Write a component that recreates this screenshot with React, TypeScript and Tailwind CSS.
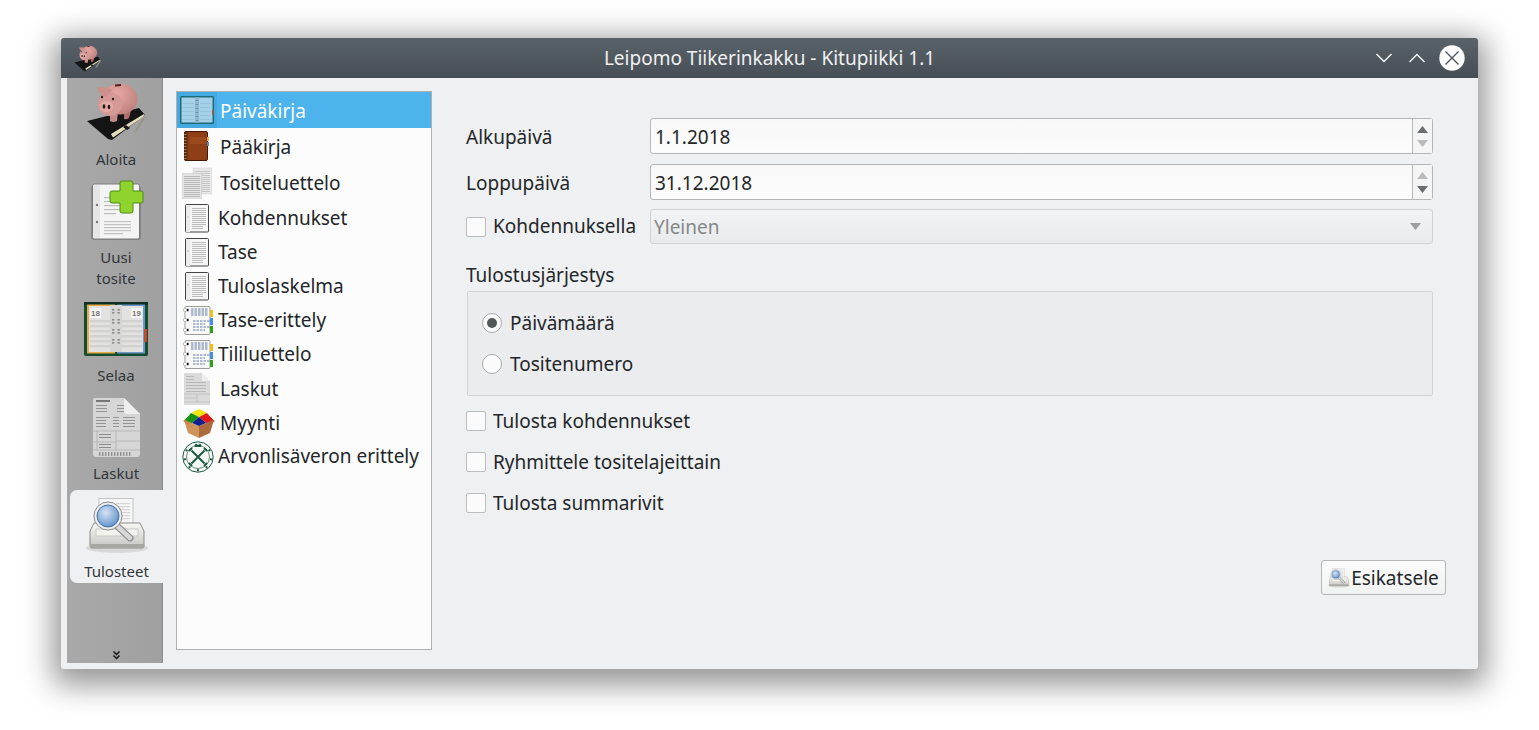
import { type ReactNode } from "react";

type IconProps = { w: number; h: number };

const Pig = ({ w, h }: IconProps) => (
  <svg width={w} height={h} viewBox="0 0 60 60">
    <defs>
      <radialGradient id="pigBody" cx="0.4" cy="0.35" r="0.8">
        <stop offset="0" stopColor="#e6aaa5" />
        <stop offset="1" stopColor="#b97a76" />
      </radialGradient>
    </defs>
    <path d="M1 39 L53 26 L59 33 L26 58 L22 57 Z" fill="#141414" />
    <path d="M25 52 L58 32 L58.5 34 L27 55.5 Z" fill="#e4dfbd" />
    <path d="M37 45 L40 43 L44 46 L41 48 Z" fill="#141414" />
    <path d="M58 33 L49 48 L48 51 L51 49 L60 35 Z" fill="#96968c" />
    <path d="M24 30 L24 39 Q27 41 31 39 L32 30 Z" fill="#c58a86" />
    <path d="M38 30 L38 37 Q41 38 43 36 L45 28 Z" fill="#ae716d" />
    <ellipse cx="34" cy="17" rx="17.5" ry="15.5" fill="url(#pigBody)" />
    <ellipse cx="24" cy="22" rx="12" ry="12" fill="#d69a96" />
    <path d="M11 6 Q18 3 26 8 L20 15 Q14 13 11 6 Z" fill="#cf8f8b" />
    <path d="M29 2.5 L35 2 L35 4 L29 4.5 Z" fill="#4a2020" />
    <ellipse cx="20.5" cy="24.5" rx="6.5" ry="5.5" fill="#e3aaa6" />
    <ellipse cx="18" cy="24.5" rx="1.4" ry="2.2" fill="#2a1a1a" />
    <ellipse cx="23" cy="25" rx="1.4" ry="2.2" fill="#2a1a1a" />
    <circle cx="16" cy="15" r="1.2" fill="#2a1a1a" />
    <circle cx="27" cy="17" r="1.2" fill="#2a1a1a" />
  </svg>
);

const NewDoc = ({ w, h }: IconProps) => (
  <svg width={w} height={h} viewBox="0 0 60 60">
    <rect x="5" y="6" width="50" height="54" rx="3" fill="#000" opacity="0.18" />
    <rect x="6.5" y="4" width="47" height="55" rx="2" fill="#f4f4f4" stroke="#7c7c7c" />
    <rect x="7" y="5" width="7" height="53" fill="#e6e6e6" />
    <circle cx="11" cy="25" r="1.2" fill="#777" />
    <circle cx="11" cy="42" r="1.2" fill="#777" />
    {[17, 21, 25, 29, 33].map((y) => (
      <rect key={y} x="18" y={y} width={y === 33 ? 12 : 20} height="1.2" fill="#bdbdbd" />
    ))}
    {[41, 44, 47, 50, 53].map((y) => (
      <rect key={y} x="18" y={y} width={y === 53 ? 19 : 27} height="1.2" fill="#c2c2c2" />
    ))}
    <path
      d="M36 1 H45 Q47 1 47 3 V11 H55 Q57 11 57 13 V21 Q57 23 55 23 H47 V31 Q47 33 45 33 H36 Q34 33 34 31 V23 H26 Q24 23 24 21 V13 Q24 11 26 11 H34 V3 Q34 1 36 1 Z"
      fill="#8fd42c"
      stroke="#4f8a12"
      strokeWidth="1"
    />
  </svg>
);

const Planner = ({ w, h }: IconProps) => (
  <svg width={w} height={h} viewBox="0 0 64 54">
    <rect x="0" y="0" width="64" height="54" rx="2" fill="#134d2f" />
    <rect x="0" y="0" width="64" height="3" fill="#0f2f22" />
    <rect x="3" y="2.5" width="28" height="49" fill="#e8ab48" />
    <rect x="33" y="2.5" width="28" height="49" fill="#6f96c8" />
    <rect x="60" y="27" width="3" height="13" fill="#c44a28" />
    <rect x="5" y="4" width="54" height="46" fill="#e2e2e0" />
    <rect x="6" y="6" width="11" height="10" rx="1" fill="#f6f6f6" />
    <rect x="47" y="6" width="11" height="10" rx="1" fill="#f6f6f6" />
    <text x="11.5" y="14" textAnchor="middle" fontSize="8" fontWeight="700" fill="#777" fontFamily="'Liberation Sans', sans-serif">18</text>
    <text x="52.5" y="14" textAnchor="middle" fontSize="8" fontWeight="700" fill="#777" fontFamily="'Liberation Sans', sans-serif">19</text>
    {[18, 23, 28, 33, 38, 43].map((y) => (
      <g key={y}>
        <rect x="6" y={y} width="20" height="2.4" fill="#d2d2d0" />
        <rect x="38" y={y} width="20" height="2.4" fill="#d2d2d0" />
      </g>
    ))}
    <rect x="26" y="3" width="12" height="47" fill="#d6d6d4" />
    {[7, 10, 17, 20, 27, 30, 37, 40].map((y) => (
      <g key={y}>
        <rect x="28" y={y} width="2.4" height="1.6" fill="#8b8b89" />
        <rect x="33.5" y={y} width="2.4" height="1.6" fill="#8b8b89" />
      </g>
    ))}
  </svg>
);

const Invoice = ({ w, h }: IconProps) => (
  <svg width={w} height={h} viewBox="0 0 47 59">
    <path d="M2 0 H31 L47 16 V56 Q47 59 44 59 H3 Q0 59 0 56 V2 Q0 0 2 0 Z" fill="#d6d6d6" />
    <path d="M31 0 L47 16 H34 Q31 16 31 13 Z" fill="#eeeeee" />
    <rect x="3" y="2" width="14" height="2" fill="#777" />
    {[7, 10, 13].map((y) => (
      <g key={y}>
        <rect x="3" y={y} width="11" height="1" fill="#949494" />
        <rect x="24" y={y} width="7" height="1" fill="#949494" />
      </g>
    ))}
    {[19, 22, 25, 28].map((y) => (
      <g key={y}>
        <rect x="3" y={y} width={y === 19 ? 14 : 10} height="1" fill="#949494" />
        <rect x="20" y={y} width="6" height="1" fill="#949494" />
        <rect x="30" y={y} width="12" height="1" fill="#949494" />
      </g>
    ))}
    <path d="M0 33 H47 M23 33 V52 M0 44 H23 M0 52 H47 M23 43 H47 M4 33 V52" stroke="#a4a4a4" strokeWidth="0.6" fill="none" />
    {[36, 39, 46, 49].map((y) => (
      <rect key={y} x="6" y={y} width="12" height="1" fill="#8c8c8c" />
    ))}
    {[6, 9, 12, 15, 18, 21, 24, 27, 30, 33, 36].map((x) => (
      <rect key={x} x={x} y="54" width="1.4" height="4" fill="#909090" />
    ))}
  </svg>
);

const Preview = ({ w, h }: IconProps) => (
  <svg width={w} height={h} viewBox="0 0 62 56">
    <defs>
      <linearGradient id="prBody" x1="0" y1="0" x2="0" y2="1">
        <stop offset="0" stopColor="#f8f8f6" />
        <stop offset="1" stopColor="#c4c4c0" />
      </linearGradient>
      <radialGradient id="prLens" cx="0.4" cy="0.35" r="0.7">
        <stop offset="0" stopColor="#d5e3f4" />
        <stop offset="1" stopColor="#5f8fca" />
      </radialGradient>
    </defs>
    <ellipse cx="31" cy="50" rx="31" ry="5" fill="#d8d8d8" />
    <rect x="13" y="0.5" width="34" height="30" fill="#f6f6f6" stroke="#c4c4c4" />
    {[5, 8, 11, 14, 17, 20].map((y) => (
      <rect key={y} x="30" y={y} width="14" height="1.2" fill="#d6d6d6" />
    ))}
    <path d="M8 25 H54 L58 33 V48 Q58 50 56 50 H6 Q4 50 4 48 V33 Z" fill="url(#prBody)" stroke="#8b8b87" />
    <rect x="4.5" y="46" width="53" height="4" fill="#a6a6a3" />
    <path d="M10 31 H52 V38 H10 Z" fill="#f2f2ef" stroke="#c9c9c5" />
    <line x1="30" y1="27" x2="44" y2="40" stroke="#8c8c8c" strokeWidth="7" strokeLinecap="round" />
    <line x1="30" y1="27" x2="44" y2="40" stroke="#d8d8d8" strokeWidth="4.5" strokeLinecap="round" />
    <circle cx="22" cy="18" r="14" fill="#efefef" stroke="#8c8c8c" strokeWidth="1" />
    <circle cx="22" cy="18" r="11" fill="url(#prLens)" stroke="#3f6ea8" strokeWidth="1" />
  </svg>
);

const LogBook = ({ w, h }: IconProps) => (
  <svg width={w} height={h} viewBox="0 0 34 28">
    <rect x="0" y="0" width="34" height="28" rx="1.5" fill="#1d6a78" />
    <rect x="1.5" y="1.5" width="31" height="25" fill="#a4d0e8" />
    {[7, 11, 15, 19, 23].map((y) => (
      <g key={y}>
        <rect x="3" y={y} width="11" height="1" fill="#94c2dc" />
        <rect x="20" y={y} width="11" height="1" fill="#94c2dc" />
      </g>
    ))}
    <rect x="15" y="1.5" width="4" height="25" fill="#8fb8d0" />
    {[4, 8, 12, 16, 20, 24].map((y) => (
      <rect key={y} x="15.5" y={y} width="3" height="1" fill="#6e96ae" />
    ))}
    <rect x="32" y="14" width="1.5" height="5" fill="#b85a3a" />
  </svg>
);

const Ledger = ({ w, h }: IconProps) => (
  <svg width={w} height={h} viewBox="0 0 25 31">
    <rect x="0.5" y="0.5" width="23" height="29" rx="1.5" fill="#8e3f15" stroke="#3f1c08" />
    <rect x="0.5" y="0.5" width="3" height="29" fill="#5d2a0e" />
    {[3, 6, 9, 12, 15, 18, 21, 24, 27].map((y) => (
      <rect key={y} x="0" y={y} width="2.5" height="0.8" fill="#b8906c" />
    ))}
    <rect x="6" y="6" width="16" height="7" fill="#9c4a1c" />
    <rect x="23" y="6" width="2" height="4" fill="#e9b04e" />
    <rect x="23" y="11" width="2" height="4" fill="#5c86b4" />
  </svg>
);

const Papers = ({ w, h }: IconProps) => (
  <svg width={w} height={h} viewBox="0 0 30 32">
    <rect x="11" y="1" width="19" height="26" fill="#e8e8e8" stroke="#d4d4d4" strokeWidth="0.6" />
    {[4, 6, 8, 10, 12, 14, 16, 18, 20, 22, 24].map((y) => (
      <rect key={y} x="13" y={y} width="15" height="0.8" fill="#bcbcbc" />
    ))}
    <rect x="0.5" y="6.5" width="19" height="25" fill="#e4e4e4" stroke="#cccccc" strokeWidth="0.6" />
    {[9, 11, 13, 15, 17, 19, 21, 23, 25, 27, 29].map((y) => (
      <rect key={y} x="2" y={y} width="16" height="0.8" fill="#b0b0b0" />
    ))}
  </svg>
);

const PlainDoc = ({ w, h }: IconProps) => (
  <svg width={w} height={h} viewBox="0 0 24 29">
    <rect x="0.5" y="0.5" width="23" height="27.5" rx="1" fill="#f6f6f6" stroke="#444" />
    <rect x="1" y="1" width="4" height="27" fill="#ececec" />
    <circle cx="3" cy="13" r="0.5" fill="#777" />
    {[4, 6, 8, 10, 12, 14, 16, 18, 20, 22, 24].map((y) => (
      <rect key={y} x="7" y={y} width={y > 20 ? 11 : 14} height="0.7" fill="#a4a4a4" />
    ))}
  </svg>
);

const TabbedDoc = ({ w, h }: IconProps) => (
  <svg width={w} height={h} viewBox="0 0 30 29">
    <rect x="2" y="0.5" width="25" height="28" rx="1" fill="#f8f8f8" stroke="#9c9c9c" />
    <rect x="27" y="4" width="3" height="7" fill="#f2bb1a" />
    <rect x="27" y="12" width="3" height="7" fill="#3f8fe8" />
    <rect x="27" y="20" width="3" height="7" fill="#2f9f14" />
    {[4, 14, 24].map((y) => (
      <g key={y}>
        <circle cx="2" cy={y} r="1.7" fill="#fff" stroke="#999" strokeWidth="0.6" />
        <rect x="4" y={y - 1.2} width="1.6" height="2.4" fill="#111" />
      </g>
    ))}
    {[3, 5, 7, 9, 15, 18, 21, 24].map((y) => (
      <path
        key={y}
        d={`M${y > 10 ? 10 : 8} ${y} h${y % 2 ? 17 : 12}`}
        fill="none"
        stroke="#3e5c90"
        strokeWidth="0.8"
        strokeDasharray="2.5 1"
      />
    ))}
  </svg>
);

const InvoiceSmall = ({ w, h }: IconProps) => (
  <svg width={w} height={h} viewBox="0 0 26 32">
    <path d="M0 0 H18 L26 8 V32 H0 Z" fill="#dadada" />
    <path d="M18 0 L26 8 H18 Z" fill="#efefef" />
    {[3, 6, 9, 12, 15, 18].map((y) => (
      <rect key={y} x="2" y={y} width={y < 9 ? 8 : 20} height="0.7" fill="#aaaaaa" />
    ))}
    <path d="M0 21 H26 M13 21 V29 M0 29 H26 M0 25 H13" stroke="#b2b2b2" strokeWidth="0.6" fill="none" />
  </svg>
);

const Crate = ({ w, h }: IconProps) => (
  <svg width={w} height={h} viewBox="0 0 32 29">
    <path d="M1 11 L16 17 L16 29 L5 24 Z" fill="#d0935a" />
    <path d="M31 11 L16 17 L16 29 L27 24 Z" fill="#ad6c3e" />
    <path d="M0 12 L6 7 L9 14 L5 16 Z" fill="#c98a4e" />
    <path d="M32 12 L26 7 L23 14 L27 16 Z" fill="#a9683a" />
    <path d="M16 0 L24 4 L16 8 L8 4 Z" fill="#f2e312" />
    <path d="M24 4 L30 11 L23 14 L16 8 Z" fill="#e41818" />
    <path d="M8 4 L16 8 L9 14 L2 11 Z" fill="#129412" />
    <path d="M16 8 L23 14 L16 17 L9 14 Z" fill="#141e8c" />
  </svg>
);

const Emblem = ({ w, h }: IconProps) => (
  <svg width={w} height={h} viewBox="0 0 32 32">
    <circle cx="16" cy="16" r="15.2" fill="#f8faf8" stroke="#1f5a40" strokeWidth="1" />
    <circle cx="16" cy="16" r="11.5" fill="none" stroke="#1f5a40" strokeWidth="0.7" />
    <path d="M9.5 9.5 L22.5 22.5 M22.5 9.5 L9.5 22.5" stroke="#1f5a40" strokeWidth="2" />
    <path d="M7 10 L10 7 M25 10 L22 7 M7 22 L10 25 M25 22 L22 25" stroke="#1f5a40" strokeWidth="2" />
    <path d="M12.5 4 L14 2.5 L16 4 L18 2.5 L19.5 4 L19 6 H13 Z" fill="#1f5a40" />
    {[60, 100, 140, 180, 220, 260, 300].map((a) => (
      <rect key={a} x="15" y="1.8" width="2" height="2" fill="#1f5a40" transform={`rotate(${a} 16 16)`} />
    ))}
  </svg>
);

const sideItems: { label: ReactNode; icon: ReactNode; h: string; pt: string; current?: boolean }[] = [
  { label: "Aloita", icon: <Pig w={60} h={60} />, h: "h-[98px]", pt: "pt-[4px]" },
  { label: <>Uusi<br />tosite</>, icon: <NewDoc w={60} h={60} />, h: "h-[118px]", pt: "pt-[4px]" },
  { label: "Selaa", icon: <Planner w={64} h={54} />, h: "h-[98px]", pt: "pt-[8px]" },
  { label: "Laskut", icon: <Invoice w={47} h={59} />, h: "h-[98px]", pt: "pt-[5px]" },
  { label: "Tulosteet", icon: <Preview w={62} h={56} />, h: "h-[93px]", pt: "pt-[8px]", current: true },
];

const listItems: { label: string; icon: ReactNode; box: string; h: string; text?: string; current?: boolean }[] = [
  { label: "Päiväkirja", icon: <LogBook w={34} h={28} />, box: "w-[40px] mr-[3px]", h: "h-[36px]", text: "pt-[2px]", current: true },
  { label: "Pääkirja", icon: <Ledger w={25} h={31} />, box: "w-[43px] pr-[4px]", h: "h-[36px]", text: "pt-[2px]" },
  { label: "Tositeluettelo", icon: <Papers w={30} h={32} />, box: "w-[43px] pr-[3px]", h: "h-[37px]", text: "pt-[2px]" },
  { label: "Kohdennukset", icon: <PlainDoc w={24} h={29} />, box: "w-[41px] pr-[2px]", h: "h-[34px]" },
  { label: "Tase", icon: <PlainDoc w={24} h={29} />, box: "w-[41px] pr-[2px]", h: "h-[34px]" },
  { label: "Tuloslaskelma", icon: <PlainDoc w={24} h={29} />, box: "w-[41px] pr-[2px]", h: "h-[34px]" },
  { label: "Tase-erittely", icon: <TabbedDoc w={30} h={29} />, box: "w-[41px]", h: "h-[34px]" },
  { label: "Tililuettelo", icon: <TabbedDoc w={30} h={29} />, box: "w-[41px]", h: "h-[34px]" },
  { label: "Laskut", icon: <InvoiceSmall w={26} h={32} />, box: "w-[43px] pr-[3px]", h: "h-[35px]", text: "pt-[2px]" },
  { label: "Myynti", icon: <Crate w={32} h={29} />, box: "w-[43px]", h: "h-[34px]" },
  { label: "Arvonlisäveron erittely", icon: <Emblem w={32} h={32} />, box: "w-[41px]", h: "h-[33px]" },
];

const Arrow = ({ up, tone }: { up?: boolean; tone: string }) => (
  <svg width="11" height="7" viewBox="0 0 11 7" className={tone}>
    <path d={up ? "M5.5 0 L11 7 H0 Z" : "M0 0 H11 L5.5 7 Z"} fill="currentColor" />
  </svg>
);

const DateField = ({ value, upDark }: { value: string; upDark: boolean }) => (
  <div className="flex h-[36px] flex-1 items-center rounded-[3px] border border-[#b5b6b7] bg-gradient-to-b from-[#f8f8f8] to-[#fcfcfc]">
    <span className="flex-1 pl-[4px] pt-[2px]">{value}</span>
    <div className="flex h-full w-[20px] flex-col items-center justify-center gap-[7px] border-l border-[#b5b6b7] bg-[#f5f5f5]">
      <Arrow up tone={upDark ? "text-[#6b6e70]" : "text-[#b9bbbd]"} />
      <Arrow tone={upDark ? "text-[#b9bbbd]" : "text-[#6b6e70]"} />
    </div>
  </div>
);

const Check = ({ label, className, text }: { label: string; className: string; text?: string }) => (
  <div className={`flex items-center gap-[7px] ${className}`}>
    <div className="h-[20px] w-[20px] rounded-[2px] border border-[#bcbdbe] bg-[#fbfbfb]" />
    <span className={text}>{label}</span>
  </div>
);

const Radio = ({ label, on }: { label: string; on?: boolean }) => (
  <div className="flex h-[41px] items-center gap-[8px]">
    <div className="flex h-[20px] w-[20px] items-center justify-center rounded-full border border-[#a9aaab] bg-[#fbfbfb]">
      {on && <div className="h-[10px] w-[10px] rounded-full bg-[#55585b]" />}
    </div>
    <span>{label}</span>
  </div>
);

export default function App() {
  return (
    <div className="h-screen w-screen overflow-hidden bg-white pl-[61px] pt-[38px] font-['Noto_Sans',sans-serif] text-[19px] text-[#232629]">
      <div className="flex h-[631px] w-[1417px] flex-col rounded-[3px] bg-[#eff0f1] shadow-[0_8px_30px_8px_rgba(0,0,0,0.42)]">
        <header className="grid h-[40px] shrink-0 grid-cols-[1fr_auto_1fr] items-center rounded-t-[3px] bg-gradient-to-b from-[#5b636a] to-[#474e55] px-[13px] text-[#eff0f1]">
          <Pig w={27} h={27} />
          <div className="text-center">Leipomo Tiikerinkakku - Kitupiikki 1.1</div>
          <div className="flex items-center justify-end">
            <svg width="18" height="10" viewBox="0 0 18 10" className="mr-[15px]">
              <path d="M1.5 1 L9 8.5 L16.5 1" fill="none" stroke="#f4f5f5" strokeWidth="1.4" />
            </svg>
            <svg width="18" height="10" viewBox="0 0 18 10" className="mr-[13px]">
              <path d="M1.5 9 L9 1.5 L16.5 9" fill="none" stroke="#f4f5f5" strokeWidth="1.4" />
            </svg>
            <svg width="26" height="26" viewBox="0 0 26 26">
              <circle cx="13" cy="13" r="12.7" fill="#fcfcfc" />
              <path d="M6.5 6.5 L19.5 19.5 M19.5 6.5 L6.5 19.5" stroke="#4d555c" strokeWidth="1.4" />
            </svg>
          </div>
        </header>

        <div className="flex min-h-0 flex-1">
          <aside className="ml-[6px] mb-[6px] flex w-[96px] flex-col border-r border-[#8e8e8e] bg-gradient-to-r from-[#a9a9a9] to-[#a0a0a0] pl-[3px] text-[15px] leading-[21px] text-[#31363b]">
            {sideItems.map((item, i) => (
              <div
                key={i}
                className={`flex flex-col items-center ${item.h} ${item.pt} ${
                  item.current ? "-mr-px rounded-l-[7px] bg-[#eff0f1]" : ""
                }`}
              >
                <div className={`flex items-center justify-center ${i === 2 ? "h-[54px]" : i === 4 ? "h-[56px]" : "h-[60px]"}`}>{item.icon}</div>
                <div className={`text-center ${i === 2 ? "mt-[9px]" : i === 3 ? "mt-[6px]" : "mt-[7px]"}`}>{item.label}</div>
              </div>
            ))}
            <div className="mt-auto flex justify-center pb-[3px]">
              <svg width="7" height="9" viewBox="0 0 7 9">
                <path d="M0.5 0.5 L3.5 3.5 L6.5 0.5 M0.5 4.5 L3.5 7.5 L6.5 4.5" fill="none" stroke="#111" strokeWidth="1.5" />
              </svg>
            </div>
          </aside>

          <div className="flex flex-1 pb-[19px] pl-[13px] pr-[32px] pt-[13px]">
            <nav className="w-[256px] shrink-0 border border-[#b0b1b3] bg-[#fcfcfc]">
              {listItems.map((item) => (
                <div
                  key={item.label}
                  className={`flex items-center ${item.h} ${item.current ? "bg-[#4cb3ec] text-[#fcfcfc]" : ""}`}
                >
                  <div className={`flex h-full shrink-0 items-center justify-center ${item.box} ${item.current ? "bg-[#44a9e1]" : ""}`}>
                    {item.icon}
                  </div>
                  <span className={item.text}>{item.label}</span>
                </div>
              ))}
            </nav>

            <main className="ml-[34px] flex flex-1 flex-col pt-[27px]">
              <div className="mr-[13px]">
                <div className="flex items-center">
                  <span className="w-[184px] pt-[2px]">Alkupäivä</span>
                  <DateField value="1.1.2018" upDark />
                </div>
                <div className="mt-[10px] flex items-center">
                  <span className="w-[184px] pt-[2px]">Loppupäivä</span>
                  <DateField value="31.12.2018" upDark={false} />
                </div>
                <div className="mt-[9px] flex items-center">
                  <Check label="Kohdennuksella" className="w-[184px]" />
                  <div className="flex h-[35px] flex-1 items-center justify-between rounded-[3px] border border-[#d0d1d2] bg-gradient-to-b from-[#f2f3f4] to-[#e9eaeb] pl-[3px] pr-[11px] text-[#85888b]">
                    <span className="pt-[2px]">Yleinen</span>
                    <Arrow tone="text-[#9b9d9f]" />
                  </div>
                </div>
                <div className="mt-[19px] h-[28px] leading-[24px]">Tulostusjärjestys</div>
                <div className="ml-px flex h-[105px] flex-col justify-center rounded-[2px] border border-[#d3d4d6] bg-[#ebecee] pl-[14px]">
                  <Radio label="Päivämäärä" on />
                  <Radio label="Tositenumero" />
                </div>
                <Check label="Tulosta kohdennukset" className="mt-[4px] h-[41px]" text="pt-[2px]" />
                <Check label="Ryhmittele tositelajeittain" className="h-[41px]" text="pt-[2px]" />
                <Check label="Tulosta summarivit" className="h-[41px]" text="pt-[2px]" />
              </div>
              <div className="mt-[37px] flex justify-end">
                <button className="flex h-[35px] w-[125px] items-center justify-center gap-[1px] rounded-[3px] border border-[#b5b6b7] bg-gradient-to-b from-[#fbfbfb] to-[#f1f2f2]">
                  <Preview w={22} h={20} />
                  <span className="pt-[2px]">Esikatsele</span>
                </button>
              </div>
            </main>
          </div>
        </div>
      </div>
    </div>
  );
}
